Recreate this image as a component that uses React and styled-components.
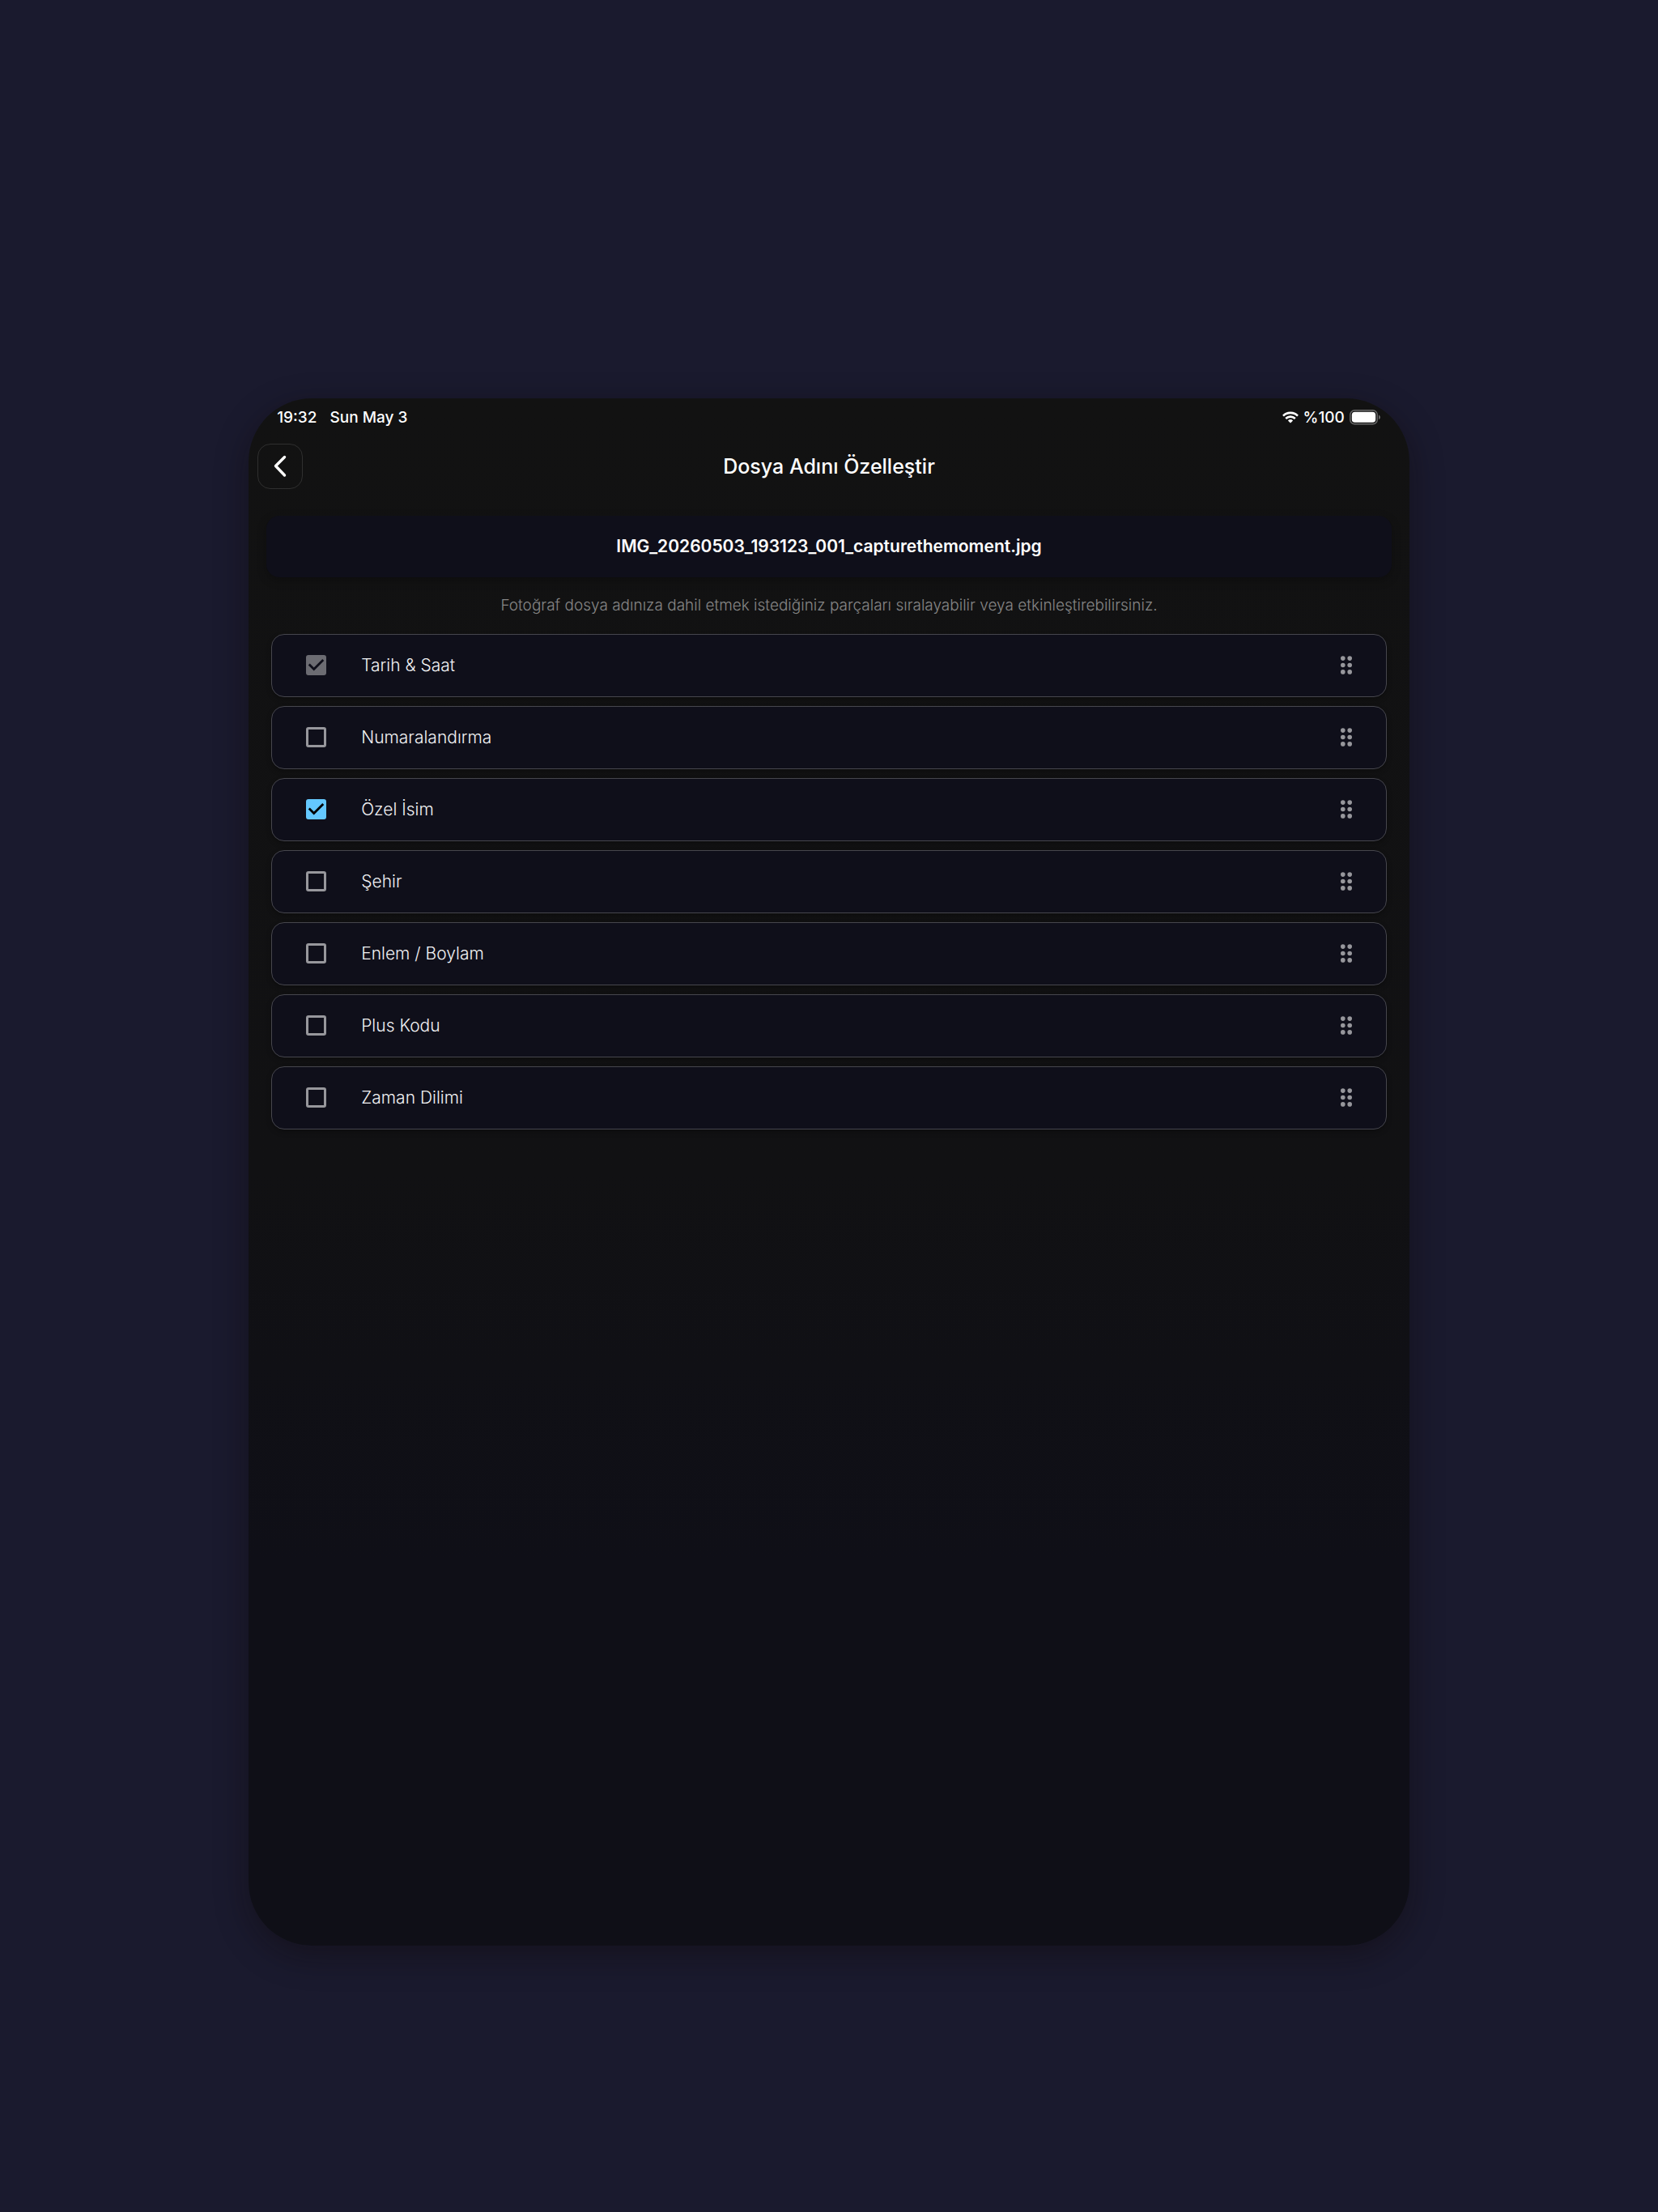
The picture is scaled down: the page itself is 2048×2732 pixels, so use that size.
import React, { useState } from 'react';
import styled, { createGlobalStyle } from 'styled-components';

const GlobalStyle = createGlobalStyle`
  * {
    box-sizing: border-box;
  }

  body {
    margin: 0;
    background-color: #1a1a2e;
    font-family: Inter, 'Liberation Sans', sans-serif;
    color: #fff;
  }
`;

const Page = styled.div`
  min-height: 100vh;
  padding: 24vw 15%;
  padding-bottom: 16vw;
`;

const Screen = styled.main`
  aspect-ratio: 3 / 4;
  padding-top: 12px;
  border-radius: 78px;
  background: linear-gradient(#121212, #111113 50%, #0f0f17 75%, #0f0f17);
  box-shadow: 0 12px 40px rgba(16, 8, 8, 0.4);
`;

const StatusBar = styled.div`
  display: flex;
  align-items: center;
  justify-content: space-between;
  padding: 0 35px;
  font-size: 19px;
  line-height: 24px;
  font-weight: 500;
`;

const StatusGroup = styled.div`
  display: flex;
  align-items: center;
  gap: ${(props) => props.$gap}px;
`;

const Header = styled.header`
  display: grid;
  grid-template-columns: 56px 1fr 56px;
  align-items: center;
  margin-top: 20px;
  padding: 0 11px;
`;

const BackButton = styled.button`
  display: grid;
  place-items: center;
  width: 56px;
  height: 56px;
  padding: 0;
  border: 1px solid #2f2f2f;
  border-radius: 16px;
  background-color: transparent;
  color: #fff;
  cursor: pointer;
`;

const Title = styled.h1`
  margin: 0;
  font-size: 25px;
  line-height: 32px;
  font-weight: 500;
  text-align: center;
`;

const FileName = styled.p`
  margin: 33px 22px 0;
  padding: 22px 24px;
  border-radius: 16px;
  background-color: #0f0f1a;
  box-shadow: 0 4px 12px rgba(0, 0, 0, 0.25);
  font-size: 21px;
  line-height: 32px;
  font-weight: 600;
  text-align: center;
`;

const Hint = styled.p`
  margin: 22px;
  font-size: 19px;
  line-height: 26px;
  font-weight: 300;
  color: #868686;
  text-align: center;
`;

const PartList = styled.ul`
  display: flex;
  flex-direction: column;
  gap: 11px;
  margin: 0 28px;
  padding: 0;
  list-style-type: none;
`;

const PartItem = styled.li`
  display: flex;
  align-items: center;
  height: 78px;
  padding: 0 42px;
  border: 1px solid #46464d;
  border-radius: 16px;
  background-color: #0f0f1a;
  box-shadow: 0 3px 6px rgba(0, 0, 0, 0.25);
`;

const CheckWrapper = styled.span`
  display: grid;

  > * {
    grid-area: 1 / 1;
  }
`;

const CheckInput = styled.input`
  appearance: none;
  width: 25px;
  height: 25px;
  margin: 0;
  border: 3px solid #97979c;
  border-radius: 3px;

  &:checked {
    border-color: #64c8ff;
    background-color: #64c8ff;
  }

  &:disabled {
    border-color: #6c6c72;
    background-color: #6c6c72;
  }
`;

const CheckMark = styled.svg`
  width: 25px;
  height: 25px;
  fill: ${(props) => (props.$muted ? '#0f0f1a' : '#000')};
  pointer-events: none;
`;

const PartLabel = styled.label`
  flex: 1;
  margin-left: 43px;
  font-size: 21px;
  line-height: 28px;
  font-weight: 300;
  color: #f2f2f4;
`;

const DragHandle = styled.button`
  display: flex;
  padding: 0;
  border: none;
  background: none;
  color: #97979c;
  cursor: grab;
`;

const initialParts = [
  { id: 'date', name: 'Tarih & Saat', checked: true, locked: true },
  { id: 'number', name: 'Numaralandırma', checked: false },
  { id: 'custom', name: 'Özel İsim', checked: true },
  { id: 'city', name: 'Şehir', checked: false },
  { id: 'coords', name: 'Enlem / Boylam', checked: false },
  { id: 'plus', name: 'Plus Kodu', checked: false },
  { id: 'timezone', name: 'Zaman Dilimi', checked: false },
];

function WifiIcon() {
  return (
    <svg width="20" height="15" viewBox="0 0 20 15" fill="none" stroke="#fff" strokeWidth="2.6">
      <path d="M1 5.6a12.8 12.8 0 0 1 18 0" />
      <path d="M4.2 9a8.3 8.3 0 0 1 11.6 0" />
      <path d="M10 14.6 6.9 11.5a4.5 4.5 0 0 1 6.2 0z" fill="#fff" stroke="none" />
    </svg>
  );
}

function BatteryIcon() {
  return (
    <svg width="39" height="19" viewBox="0 0 39 19">
      <rect x="0.8" y="0.8" width="33.4" height="17" rx="5.4" fill="none" stroke="#6b6b6b" strokeWidth="1.4" />
      <rect x="2.8" y="2.8" width="29.4" height="13" rx="3.8" fill="#fff" />
      <path d="M36 6.6c2.6 1 2.6 4.6 0 5.6z" fill="#6b6b6b" />
    </svg>
  );
}

function DragIcon() {
  return (
    <svg width="14" height="23" viewBox="7 4 10 16" fill="currentColor">
      {[6, 12, 18].map((y) => (
        <React.Fragment key={y}>
          <circle cx="9" cy={y} r="2" />
          <circle cx="15" cy={y} r="2" />
        </React.Fragment>
      ))}
    </svg>
  );
}

function App() {
  const [parts, setParts] = useState(initialParts);

  const togglePart = (id) => {
    setParts(parts.map((part) => (part.id === id ? { ...part, checked: !part.checked } : part)));
  };

  return (
    <>
      <GlobalStyle />
      <Page lang="tr">
        <Screen>
          <StatusBar>
            <StatusGroup $gap={16}>
              <span>19:32</span>
              <span>Sun May 3</span>
            </StatusGroup>
            <StatusGroup $gap={6}>
              <WifiIcon />
              <span>%100</span>
              <BatteryIcon />
            </StatusGroup>
          </StatusBar>
          <Header>
            <BackButton type="button" aria-label="Geri">
              <svg width="16" height="28" viewBox="0 0 16 28" fill="none" stroke="currentColor" strokeWidth="3.4">
                <path d="M13.5 2.5 2.5 13.5l11 11.5" strokeLinecap="round" strokeLinejoin="round" />
              </svg>
            </BackButton>
            <Title>Dosya Adını Özelleştir</Title>
          </Header>
          <FileName>IMG_20260503_193123_001_capturethemoment.jpg</FileName>
          <Hint>Fotoğraf dosya adınıza dahil etmek istediğiniz parçaları sıralayabilir veya etkinleştirebilirsiniz.</Hint>
          <PartList>
            {parts.map((part) => (
              <PartItem key={part.id}>
                <CheckWrapper>
                  <CheckInput
                    type="checkbox"
                    id={part.id}
                    checked={part.checked}
                    disabled={part.locked}
                    onChange={() => togglePart(part.id)}
                  />
                  {part.checked && (
                    <CheckMark viewBox="3 3 18 18" $muted={part.locked}>
                      <path d="M10 17l-5-5 1.41-1.41L10 14.17l7.59-7.59L19 8z" />
                    </CheckMark>
                  )}
                </CheckWrapper>
                <PartLabel htmlFor={part.id}>{part.name}</PartLabel>
                <DragHandle type="button" aria-label="Taşı">
                  <DragIcon />
                </DragHandle>
              </PartItem>
            ))}
          </PartList>
        </Screen>
      </Page>
    </>
  );
}

export default App;
